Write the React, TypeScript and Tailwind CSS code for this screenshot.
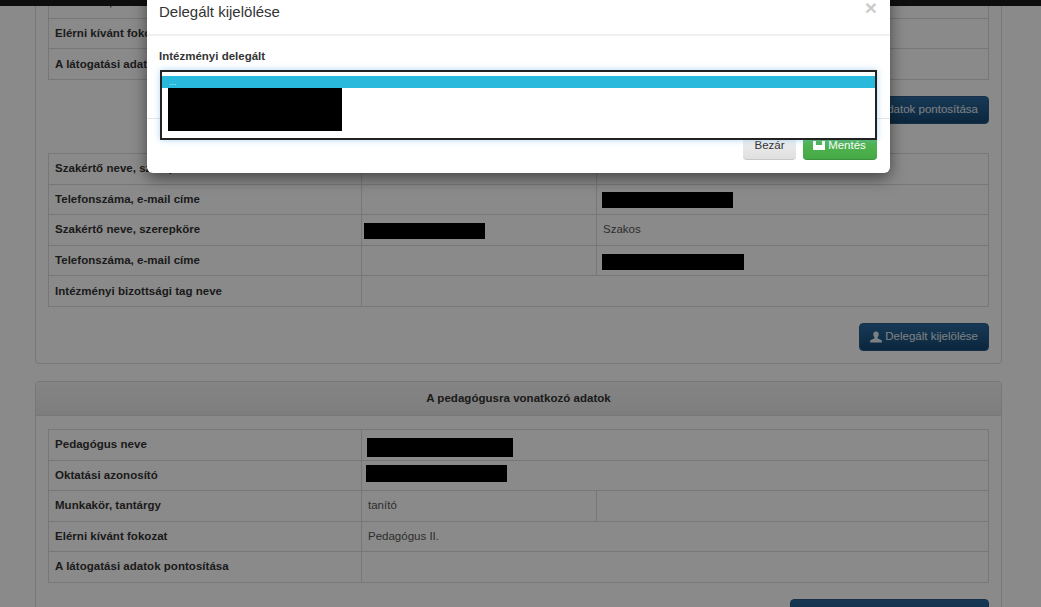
import type { ReactNode } from 'react'

function Redact({ w, h, className = '' }: { w: number; h: number; className?: string }) {
  return <div className={`bg-black ${className}`} style={{ width: w, height: h }} />
}

function UserIcon() {
  return (
    <svg viewBox="0 0 12 12" className="w-[12px] h-[12px] fill-current shrink-0">
      <path d="M6 .5C4.4.5 3.3 1.7 3.3 3.4c0 1.2.5 2.2 1.2 2.8v1.1L.9 9c-.5.2-.8.6-.8 1.1v1.4h11.8v-1.4c0-.5-.3-.9-.8-1.1L7.500 7.300V6.200c.7-.6 1.200-1.600 1.200-2.800C8.700 1.700 7.600.5 6 .5z" />
    </svg>
  )
}

function SaveIcon() {
  return (
    <svg viewBox="0 0 12 9" className="w-[12px] h-[9px] fill-current shrink-0 -mt-[1px]">
      <path d="M0 0h3v4h6V0h3v9H0z" />
    </svg>
  )
}

function BlueButton({ icon, wide, children }: { icon: ReactNode; wide?: boolean; children: ReactNode }) {
  return (
    <button className={`flex items-center h-[28px] px-[10px] rounded-[4px] border border-[#2b5a83] bg-gradient-to-b from-[#2c6a9f] to-[#144872] text-white/90 text-[11.5px] ${wide ? 'gap-[5px]' : 'gap-[3px]'}`}>
      {icon}
      {children}
    </button>
  )
}

function Row({ label, children }: { label: string; children?: ReactNode }) {
  return (
    <tr className="h-[30.6px]">
      <th className="border border-[#ddd] px-[6px] text-left font-bold text-[#333] text-[11.5px] tracking-[0.03px]">{label}</th>
      {children}
    </tr>
  )
}

function Cell({ span, children }: { span?: number; children?: ReactNode }) {
  return (
    <td colSpan={span} className="border border-[#ddd] px-[6px] text-[#555] text-[11.5px] font-normal">
      {children}
    </td>
  )
}

function DataTable({ children }: { children: ReactNode }) {
  return (
    <table className="w-full table-fixed border-collapse">
      <colgroup>
        <col className="w-[313px]" />
        <col className="w-[235px]" />
        <col />
      </colgroup>
      <tbody>{children}</tbody>
    </table>
  )
}

function VisitSection() {
  return (
    <div className="border border-[#ddd] rounded-[4px] px-[12px] pt-[13px] pb-[12px] bg-white">
      <DataTable>
        <Row label="Pedagógus neve"><Cell span={2} /></Row>
        <Row label="Oktatási azonosító"><Cell span={2} /></Row>
        <Row label="Munkakör, tantárgy"><Cell /><Cell /></Row>
        <Row label="Elérni kívánt fokozat"><Cell span={2} /></Row>
        <Row label="A látogatási adatok pontosítása"><Cell span={2} /></Row>
      </DataTable>
      <div className="flex justify-end mt-[16px] mb-[29px]">
        <BlueButton wide icon={<UserIcon />}>A látogatási adatok pontosítása</BlueButton>
      </div>
      <DataTable>
        <Row label="Szakértő neve, szerepköre"><Cell /><Cell /></Row>
        <Row label="Telefonszáma, e-mail címe">
          <Cell />
          <Cell><Redact w={131} h={16} className="-ml-[1px] mt-[2px]" /></Cell>
        </Row>
        <Row label="Szakértő neve, szerepköre">
          <Cell><Redact w={121} h={16} className="-ml-[4px] mt-[2px]" /></Cell>
          <Cell>Szakos</Cell>
        </Row>
        <Row label="Telefonszáma, e-mail címe">
          <Cell />
          <Cell><Redact w={142} h={16} className="-ml-[1px] mt-[2px]" /></Cell>
        </Row>
        <Row label="Intézményi bizottsági tag neve"><Cell span={2} /></Row>
      </DataTable>
      <div className="flex justify-end mt-[16px]">
        <BlueButton icon={<UserIcon />}>Delegált kijelölése</BlueButton>
      </div>
    </div>
  )
}

function TeacherSection() {
  return (
    <div className="border border-[#ddd] rounded-[4px] bg-white mt-[17px]">
      <div className="h-[34px] flex items-center justify-center rounded-t-[4px] border-b border-[#ddd] bg-gradient-to-b from-[#f5f5f5] to-[#e8e8e8] font-bold text-[#333] text-[11.5px] tracking-[0.03px]">
        A pedagógusra vonatkozó adatok
      </div>
      <div className="px-[12px] pt-[13px] pb-[13px]">
        <DataTable>
          <Row label="Pedagógus neve"><Cell span={2}><Redact w={146} h={19} className="-ml-[1px] mt-[5px]" /></Cell></Row>
          <Row label="Oktatási azonosító"><Cell span={2}><Redact w={141} h={17} className="-ml-[2px] mb-[4px]" /></Cell></Row>
          <Row label="Munkakör, tantárgy"><Cell>tanító</Cell><Cell /></Row>
          <Row label="Elérni kívánt fokozat"><Cell span={2}>Pedagógus II.</Cell></Row>
          <Row label="A látogatási adatok pontosítása"><Cell span={2} /></Row>
        </DataTable>
        <div className="flex justify-end mt-[16px]">
          <BlueButton wide icon={<UserIcon />}>A látogatási adatok pontosítása</BlueButton>
        </div>
      </div>
    </div>
  )
}

function Modal() {
  return (
    <div className="absolute left-[147px] top-[-20px] w-[743px] h-[193px] bg-white rounded-[6px] shadow-[0_5px_15px_rgba(0,0,0,0.5)] flex flex-col text-[#333]">
      <div className="h-[56px] shrink-0 border-b-2 border-[#f0f0f0] px-[12px] flex items-end pb-[12px] relative">
        <span className="text-[15px] leading-[20px]">Delegált kijelölése</span>
        <span className="absolute right-[13px] top-[17px] text-[#ccc] font-bold text-[21px] leading-[21px]">×</span>
      </div>
      <div className="h-[83px] shrink-0 border-b border-[#e5e5e5] px-[12px] pt-[13px] font-bold text-[11.5px] leading-[15px]">
        Intézményi delegált
      </div>
      <div className="flex justify-end gap-[7px] px-[13px] pt-[17px]">
        <button className="h-[24px] w-[53px] pb-[4px] rounded-b-[4px] border-b border-[#c8c8c8] bg-gradient-to-b from-[#f2f2f2] to-[#dfdfdf] text-[#333] text-[11.5px]">Bezár</button>
        <button className="h-[24px] w-[74px] pb-[4px] pr-[1px] flex items-center justify-center gap-[3px] rounded-b-[4px] border-b border-[#3e8f3e] bg-gradient-to-b from-[#55bb55] to-[#45a945] text-white text-[11.5px]">
          <SaveIcon />
          Mentés
        </button>
      </div>
      {/* open listbox hangs over the footer */}
      <div className="absolute left-[13px] top-[90px] w-[717px] h-[70px] border-2 border-[#222] bg-white pt-[4px] shadow-[0_0_6px_rgba(102,175,233,0.5)]">
        <div className="h-[12px] bg-[#29b9dc] text-[#bfeaf5] text-[9px] leading-[12px] px-[7px]">...</div>
        <Redact w={174} h={43} className="ml-[6px]" />
      </div>
    </div>
  )
}

export default function App() {
  return (
    <div className="relative h-[607px] overflow-hidden bg-white" style={{ fontFamily: '"Liberation Sans", Arial, sans-serif' }}>
      <div className="mt-[-88px] px-[35px] w-[1037px]">
        <VisitSection />
        <TeacherSection />
      </div>
      <div className="absolute inset-x-0 top-0 h-[6px] bg-[#1a1a1a]" />
      <div className="absolute inset-0 bg-black/[.46]" />
      <Modal />
    </div>
  )
}
